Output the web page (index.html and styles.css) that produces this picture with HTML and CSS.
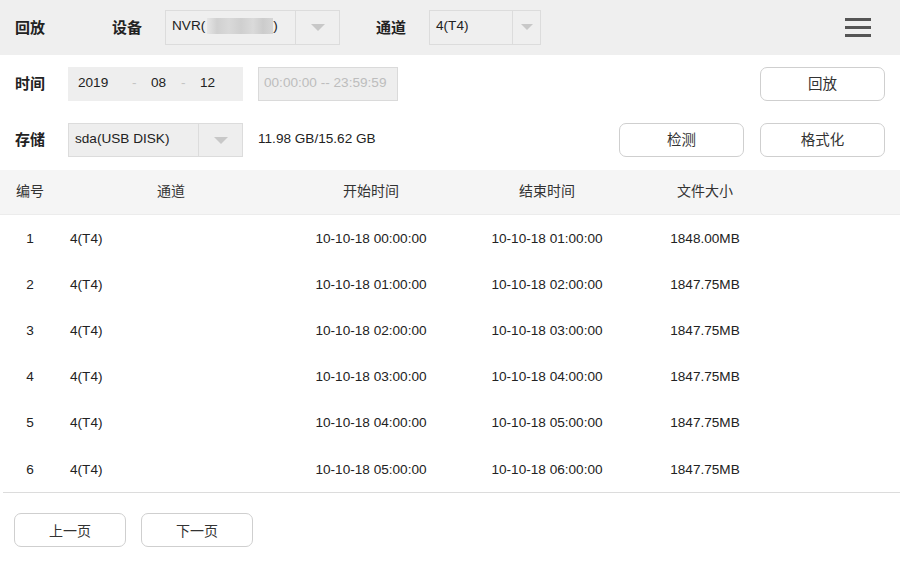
FILE: index.html
```html
<!DOCTYPE html>
<html lang="zh-CN">
<head>
<meta charset="utf-8">
<title>回放</title>
<link rel="stylesheet" href="styles.css">
</head>
<body>
<div class="page">
  <header class="topbar">
    <div class="title">回放</div>
    <div class="label">设备</div>
    <div class="select select-device">
      <div class="select-value">NVR(<span class="blur"></span>)</div>
      <div class="select-arrow"><span class="tri"></span></div>
    </div>
    <div class="label label-channel">通道</div>
    <div class="select select-channel">
      <div class="select-value">4(T4)</div>
      <div class="select-arrow"><span class="tri"></span></div>
    </div>
    <div class="menu">
      <span class="bar"></span><span class="bar"></span><span class="bar"></span>
    </div>
  </header>

  <div class="row row-time">
    <div class="label">时间</div>
    <div class="datebox">
      <span class="d-year">2019</span>
      <span class="sep">-</span>
      <span class="d-month">08</span>
      <span class="sep">-</span>
      <span class="d-day">12</span>
    </div>
    <div class="timebox">00:00:00 -- 23:59:59</div>
    <div class="actions">
      <button class="btn">回放</button>
    </div>
  </div>

  <div class="row row-storage">
    <div class="label">存储</div>
    <div class="select select-storage">
      <div class="select-value">sda(USB DISK)</div>
      <div class="select-arrow"><span class="tri"></span></div>
    </div>
    <div class="capacity">11.98 GB/15.62 GB</div>
    <div class="actions">
      <button class="btn">检测</button>
      <button class="btn">格式化</button>
    </div>
  </div>

  <div class="table">
    <div class="thead">
      <div class="c c-no">编号</div>
      <div class="c c-ch">通道</div>
      <div class="c c-st">开始时间</div>
      <div class="c c-et">结束时间</div>
      <div class="c c-sz">文件大小</div>
      <div class="c"></div>
    </div>
    <div class="tr"><div class="c c-no">1</div><div class="c c-ch">4(T4)</div><div class="c c-st">10-10-18 00:00:00</div><div class="c c-et">10-10-18 01:00:00</div><div class="c c-sz">1848.00MB</div><div class="c"></div></div>
    <div class="tr"><div class="c c-no">2</div><div class="c c-ch">4(T4)</div><div class="c c-st">10-10-18 01:00:00</div><div class="c c-et">10-10-18 02:00:00</div><div class="c c-sz">1847.75MB</div><div class="c"></div></div>
    <div class="tr"><div class="c c-no">3</div><div class="c c-ch">4(T4)</div><div class="c c-st">10-10-18 02:00:00</div><div class="c c-et">10-10-18 03:00:00</div><div class="c c-sz">1847.75MB</div><div class="c"></div></div>
    <div class="tr"><div class="c c-no">4</div><div class="c c-ch">4(T4)</div><div class="c c-st">10-10-18 03:00:00</div><div class="c c-et">10-10-18 04:00:00</div><div class="c c-sz">1847.75MB</div><div class="c"></div></div>
    <div class="tr"><div class="c c-no">5</div><div class="c c-ch">4(T4)</div><div class="c c-st">10-10-18 04:00:00</div><div class="c c-et">10-10-18 05:00:00</div><div class="c c-sz">1847.75MB</div><div class="c"></div></div>
    <div class="tr"><div class="c c-no">6</div><div class="c c-ch">4(T4)</div><div class="c c-st">10-10-18 05:00:00</div><div class="c c-et">10-10-18 06:00:00</div><div class="c c-sz">1847.75MB</div><div class="c"></div></div>
  </div>
  <div class="rule"></div>

  <div class="pager">
    <button class="btn btn-page">上一页</button>
    <button class="btn btn-page">下一页</button>
  </div>
</div>
</body>
</html>
```

FILE: styles.css
```css
* { box-sizing: border-box; }
html, body { margin: 0; padding: 0; background: #fff; }
body {
  font-family: "Liberation Sans", Arial, "Noto Sans CJK SC", sans-serif;
  font-size: 13.6px;
  color: #222;
  width: 900px;
  height: 562px;
  overflow: hidden;
}
.page { width: 900px; }

.topbar {
  height: 55px;
  background: #efefef;
  display: flex;
  align-items: center;
  padding-left: 15px;
}
.title { width: 97px; font-weight: bold; font-size: 15px; padding-bottom: 3px; }
.label { width: 53px; font-weight: bold; font-size: 15px; padding-bottom: 3px; }
.label-channel { margin-left: 36px; }

.select {
  display: flex;
  height: 35px;
  border: 1px solid #dcdcdc;
  background: #efefef;
}
.topbar .select { margin-bottom: 1px; }
.select-device { width: 175px; }
.select-channel { width: 112px; }
.select-storage { width: 175px; height: 34px; background: #eeeeee; }
.select-value {
  flex: 1;
  display: flex;
  align-items: center;
  padding-left: 6px;
  padding-bottom: 3px;
  white-space: nowrap;
}
.select-arrow {
  width: 44px;
  border-left: 1px solid #dcdcdc;
  display: flex;
  align-items: center;
  justify-content: center;
}
.select-channel .select-arrow { width: 28px; }
.tri {
  width: 0; height: 0;
  border-left: 7px solid transparent;
  border-right: 7px solid transparent;
  border-top: 7px solid #c8c8c8;
}
.select-channel .tri { border-left-width: 6px; border-right-width: 6px; border-top-width: 6px; }
.blur {
  display: inline-block;
  width: 66px;
  height: 16px;
  margin-left: 2px;
  background: linear-gradient(90deg, #e6e6e6 0, #d0d0d0 10px, #d9d9d9 22px, #cfcfcf 34px, #dadada 46px, #cccccc 56px, #d6d6d6 66px);
}

.menu {
  margin-left: auto;
  margin-right: 29px;
  width: 26px;
  display: flex;
  flex-direction: column;
  gap: 5px;
}
.menu .bar { display: block; height: 3px; background: #555; }

.row {
  display: flex;
  align-items: center;
  padding-left: 15px;
  padding-right: 15px;
  height: 34px;
}
.row-time { margin-top: 12px; }
.row-storage { margin-top: 22px; }

.datebox {
  width: 175px;
  height: 34px;
  background: #eeeeee;
  display: flex;
  align-items: center;
  padding-left: 10px;
  padding-bottom: 3px;
}
.d-year { width: 54px; }
.d-month { width: 30px; }
.sep { color: #c4c4c4; width: 19px; }
.timebox {
  margin-left: 15px;
  width: 140px;
  height: 34px;
  background: #eeeeee;
  border: 1px solid #dadada;
  color: #bdbdbd;
  display: flex;
  align-items: center;
  padding-left: 5px;
  padding-bottom: 3px;
  white-space: nowrap;
}
.capacity { margin-left: 15px; padding-bottom: 3px; }

.actions { margin-left: auto; display: flex; gap: 16px; }
.btn {
  font-family: "Liberation Sans", Arial, "Noto Sans CJK SC", sans-serif;
  font-size: 14.5px;
  color: #333;
  width: 125px;
  height: 34px;
  background: #fff;
  border: 1px solid #cfcfcf;
  border-radius: 7px;
  padding: 0 0 3px 0;
}

.table { margin-top: 13px; }
.thead, .tr {
  display: grid;
  grid-template-columns: 60px 222px 178px 174px 142px 1fr;
  align-items: center;
}
.thead {
  height: 45px;
  background: #f5f5f5;
  border-bottom: 1px solid #ececec;
  color: #333;
  font-size: 14px;
  padding-bottom: 4px;
}
.tr { height: 46.2px; }
.c { text-align: center; white-space: nowrap; }
.thead .c-no { text-align: left; padding-left: 16px; }
.tr .c-ch { text-align: left; padding-left: 10px; }
.rule { height: 1px; background: #dcdcdc; margin-left: 3px; }

.pager {
  display: flex;
  gap: 15px;
  padding-left: 14px;
  margin-top: 20px;
}
.btn-page { width: 112px; font-size: 14px; padding-bottom: 1px; }
```
